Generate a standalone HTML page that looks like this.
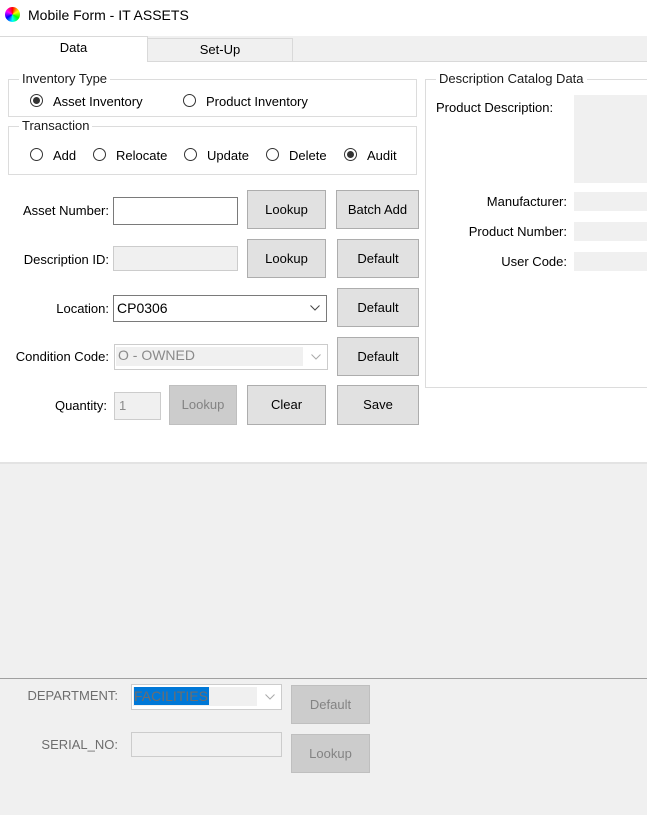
<!DOCTYPE html>
<html><head><style>
*{margin:0;padding:0;box-sizing:border-box}
body{width:647px;height:815px;background:#f0f0f0;position:relative;overflow:hidden;font-family:"Liberation Sans",sans-serif;font-size:13px;color:#000}
.a{position:absolute}
.btn{position:absolute;background:#e1e1e1;border:1px solid #adadad;text-align:center;font-size:13px}
.dis{background:#cccccc;border-color:#bfbfbf;color:#838383}
.grp{position:absolute;border:1px solid #dcdcdc}
.lg{position:absolute;background:#fff;padding:0 3px;font-size:13px;color:#1a1a1a}
.rad{position:absolute;width:13px;height:13px;border:1px solid #333;border-radius:50%;background:#fff}
.rad.on::after{content:"";position:absolute;left:2px;top:2px;width:7px;height:7px;border-radius:50%;background:#333}
.lbl{position:absolute;text-align:right;font-size:13px}
.in{position:absolute;background:#fff;border:1px solid #7a7a7a}
.gb{position:absolute;background:#f0f0f0}
.chev{position:absolute;width:10px;height:6px}
</style></head><body>
<div class="a" style="left:0;top:0;width:647px;height:36px;background:#fff"></div>
<div class="a" style="left:5px;top:7px;width:15px;height:15px;border-radius:50%;background:conic-gradient(#f00,#ff0,#0f0,#0ff,#00f,#f0f,#f00)"></div>
<div class="a" style="left:28px;top:7px;font-size:14px">Mobile Form - IT ASSETS</div>
<div class="a" style="left:147px;top:38px;width:146px;height:24px;background:#f0f0f0;border:1px solid #d9d9d9;text-align:center;line-height:22px">Set-Up</div>
<div class="a" style="left:0;top:36px;width:148px;height:27px;background:#fff;border-top:1px solid #d9d9d9;border-right:1px solid #d9d9d9;text-align:center;line-height:22px">Data</div>
<div class="a" style="left:293px;top:61px;width:354px;height:1px;background:#d9d9d9"></div>
<div class="a" style="left:0;top:62px;width:647px;height:400px;background:#fff"></div>
<div class="a" style="left:0;top:462px;width:647px;height:2px;background:#e3e3e3"></div>
<div class="grp" style="left:8px;top:79px;width:409px;height:38px"></div>
<div class="lg" style="left:19px;top:71px">Inventory Type</div>
<div class="rad on" style="left:30px;top:94px"></div><div class="a" style="left:53px;top:94px">Asset Inventory</div>
<div class="rad" style="left:183px;top:94px"></div><div class="a" style="left:206px;top:94px">Product Inventory</div>
<div class="grp" style="left:8px;top:126px;width:409px;height:49px"></div>
<div class="lg" style="left:19px;top:118px">Transaction</div>
<div class="rad" style="left:30px;top:148px"></div><div class="a" style="left:53px;top:148px">Add</div>
<div class="rad" style="left:93px;top:148px"></div><div class="a" style="left:116px;top:148px">Relocate</div>
<div class="rad" style="left:184px;top:148px"></div><div class="a" style="left:207px;top:148px">Update</div>
<div class="rad" style="left:266px;top:148px"></div><div class="a" style="left:289px;top:148px">Delete</div>
<div class="rad on" style="left:344px;top:148px"></div><div class="a" style="left:367px;top:148px">Audit</div>
<div class="lbl" style="left:0;width:109px;top:203px">Asset Number:</div>
<div class="in" style="left:113px;top:197px;width:125px;height:28px"></div>
<div class="btn" style="left:247px;top:190px;width:79px;height:39px;line-height:37px">Lookup</div>
<div class="btn" style="left:336px;top:190px;width:83px;height:39px;line-height:37px">Batch Add</div>
<div class="lbl" style="left:0;width:109px;top:252px">Description ID:</div>
<div class="in" style="left:113px;top:246px;width:125px;height:25px;background:#f0f0f0;border-color:#ccc"></div>
<div class="btn" style="left:247px;top:239px;width:79px;height:39px;line-height:37px">Lookup</div>
<div class="btn" style="left:337px;top:239px;width:82px;height:39px;line-height:37px">Default</div>
<div class="lbl" style="left:0;width:109px;top:301px">Location:</div>
<div class="in" style="left:113px;top:295px;width:214px;height:27px;padding-left:3px;line-height:24px;font-size:14px">CP0306</div>
<svg class="chev" style="left:310px;top:305px" viewBox="0 0 10 6"><path d="M0.5 0.5L5 5L9.5 0.5" fill="none" stroke="#444" stroke-width="1"/></svg>
<div class="btn" style="left:337px;top:288px;width:82px;height:39px;line-height:37px">Default</div>
<div class="lbl" style="left:0;width:109px;top:349px">Condition Code:</div>
<div class="in" style="left:114px;top:344px;width:214px;height:26px;border-color:#ccc;background:#fff"></div>
<div class="a" style="left:116px;top:347px;width:187px;height:19px;background:#f0f0f0;color:#8a8a8a;font-size:14px;padding-left:2px">O - OWNED</div>
<svg class="chev" style="left:311px;top:354px" viewBox="0 0 10 6"><path d="M0.5 0.5L5 5L9.5 0.5" fill="none" stroke="#aaa" stroke-width="1"/></svg>
<div class="btn" style="left:337px;top:337px;width:82px;height:39px;line-height:37px">Default</div>
<div class="lbl" style="left:0;width:107px;top:398px">Quantity:</div>
<div class="in" style="left:114px;top:392px;width:47px;height:28px;background:#f0f0f0;border-color:#ccc;color:#8a8a8a;padding-left:4px;line-height:26px">1</div>
<div class="btn dis" style="left:169px;top:385px;width:68px;height:40px;line-height:38px">Lookup</div>
<div class="btn" style="left:247px;top:385px;width:79px;height:40px;line-height:38px">Clear</div>
<div class="btn" style="left:337px;top:385px;width:82px;height:40px;line-height:38px">Save</div>
<div class="grp" style="left:425px;top:79px;width:230px;height:309px"></div>
<div class="lg" style="left:436px;top:71px">Description Catalog Data</div>
<div class="a" style="left:436px;top:100px">Product Description:</div>
<div class="gb" style="left:574px;top:95px;width:73px;height:88px"></div>
<div class="lbl" style="left:420px;width:147px;top:194px">Manufacturer:</div>
<div class="gb" style="left:574px;top:192px;width:73px;height:19px"></div>
<div class="lbl" style="left:420px;width:147px;top:224px">Product Number:</div>
<div class="gb" style="left:574px;top:222px;width:73px;height:19px"></div>
<div class="lbl" style="left:420px;width:147px;top:254px">User Code:</div>
<div class="gb" style="left:574px;top:252px;width:73px;height:19px"></div>
<div class="a" style="left:0;top:678px;width:647px;height:1px;background:#a0a0a0"></div>
<div class="lbl" style="left:0;width:118px;top:688px;color:#6d6d6d">DEPARTMENT:</div>
<div class="in" style="left:131px;top:684px;width:151px;height:26px;border-color:#ccc"></div>
<div class="a" style="left:133px;top:687px;width:124px;height:19px;background:#f0f0f0"></div>
<div class="a" style="left:134px;top:687px;height:18px;background:#0078d7;color:#6d6d6d;font-size:14px;line-height:18px;padding-right:1px">FACILITIES</div>
<svg class="chev" style="left:265px;top:694px" viewBox="0 0 10 6"><path d="M0.5 0.5L5 5L9.5 0.5" fill="none" stroke="#aaa" stroke-width="1"/></svg>
<div class="btn dis" style="left:291px;top:685px;width:79px;height:39px;line-height:37px">Default</div>
<div class="lbl" style="left:0;width:118px;top:737px;color:#6d6d6d">SERIAL_NO:</div>
<div class="in" style="left:131px;top:732px;width:151px;height:25px;background:#f0f0f0;border-color:#ccc"></div>
<div class="btn dis" style="left:291px;top:734px;width:79px;height:39px;line-height:37px">Lookup</div>
</body></html>
